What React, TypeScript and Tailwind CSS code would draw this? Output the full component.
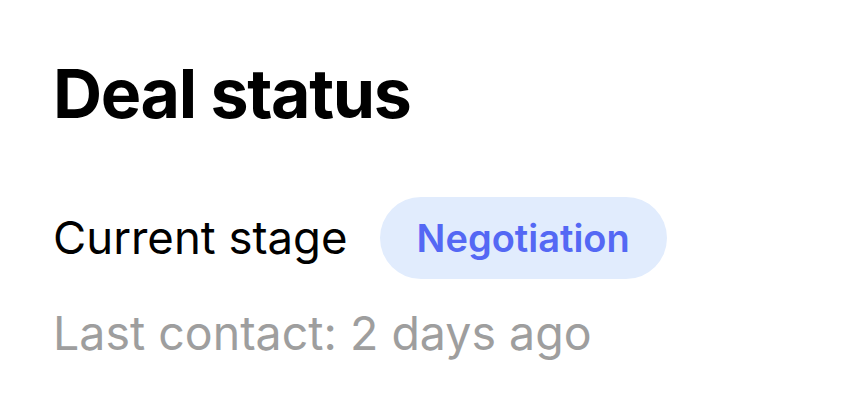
export default function App() {
  return (
    <div className="w-[850px] h-[408px] bg-white font-['Inter',sans-serif] pl-[53px] pt-[59px]">
      <h1 className="text-[68px] leading-none font-bold text-black tracking-[-0.02em]">Deal status</h1>
      <div className="mt-[70px] flex items-center gap-[32px]">
        <span className="text-[45.5px] leading-none text-black">Current stage</span>
        <span className="h-[82px] px-[37px] rounded-full bg-[#e1ecfd] flex items-center text-[38px] font-semibold text-[#5468f4]">Negotiation</span>
      </div>
      <div className="mt-[31px] text-[46.5px] leading-none text-[#9e9e9e]">Last contact: 2 days ago</div>
    </div>
  );
}
